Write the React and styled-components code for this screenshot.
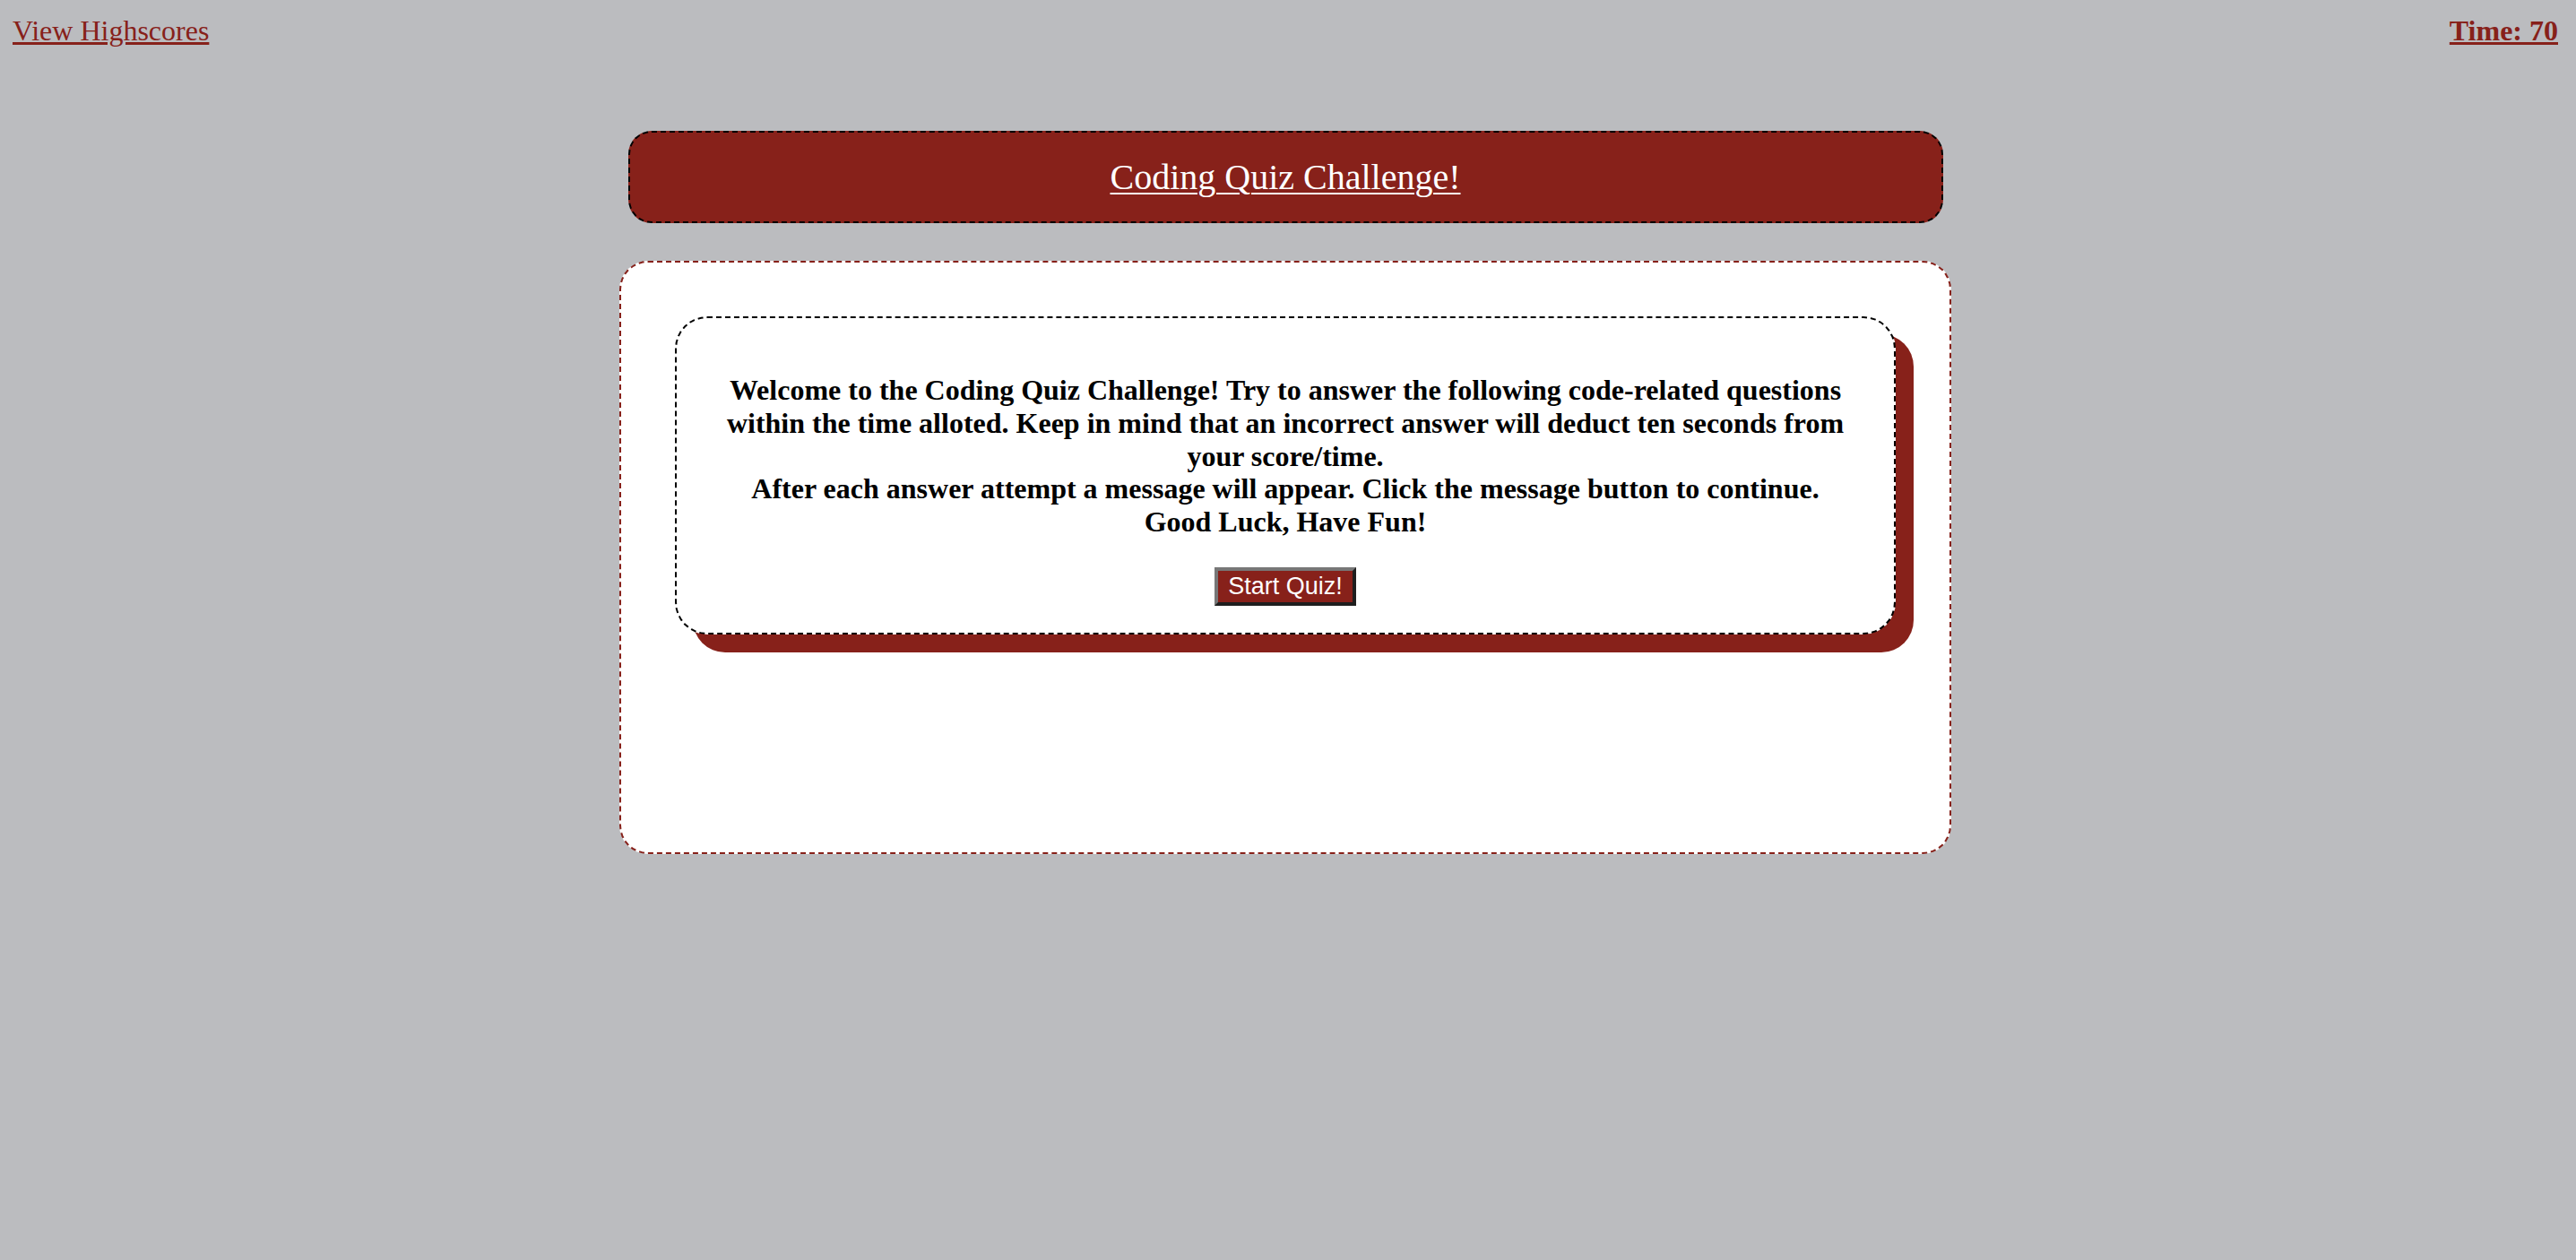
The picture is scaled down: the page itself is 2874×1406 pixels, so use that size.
import React from 'react';
import styled, {createGlobalStyle} from 'styled-components';

const red = '#87211a';

const GlobalStyle = createGlobalStyle`
  html, body {
    margin: 0;
    padding: 0;
    background-color: #bbbcbf;
    font-family: "Liberation Serif", "Times New Roman", serif;
  }
`;

const Page = styled.div`
  min-height: 1406px;
  padding-right: 6px;
  display: flex;
  flex-direction: column;
  align-items: center;
`;

const TopBar = styled.nav`
  align-self: stretch;
  display: flex;
  justify-content: space-between;
  align-items: flex-start;
  padding: 16px 14px 0 14px;
  font-size: 32px;
  line-height: 37px;
`;

const TopLink = styled.a`
  color: ${red};
  text-decoration: underline;
  font-weight: ${(p) => (p.$bold ? 700 : 400)};
  cursor: pointer;
`;

const Banner = styled.header`
  margin-top: 93px;
  width: 1467px;
  height: 103px;
  box-sizing: border-box;
  display: flex;
  align-items: center;
  justify-content: center;
  background-color: ${red};
  border: 2px dashed #000;
  border-radius: 26px;
`;

const Title = styled.h1`
  margin: 0;
  color: #fff;
  font-size: 40px;
  font-weight: 400;
  line-height: 46px;
  text-decoration: underline;
  text-decoration-thickness: 2px;
  text-underline-offset: 4px;
`;

const Card = styled.main`
  margin-top: 42px;
  width: 1486px;
  height: 662px;
  box-sizing: border-box;
  padding: 60px;
  background-color: #fff;
  border: 2px dashed ${red};
  border-radius: 32px;
`;

const Intro = styled.section`
  box-sizing: border-box;
  padding: 30px;
  display: flex;
  flex-direction: column;
  align-items: center;
  background-color: #fff;
  border: 2px dashed #000;
  border-radius: 36px;
  box-shadow: 20px 20px 0 ${red};
`;

const IntroText = styled.p`
  margin: 32px 0 32px;
  font-size: 32px;
  font-weight: 700;
  line-height: 36.8px;
  text-align: center;
  color: #000;
`;

const StartButton = styled.button`
  font-family: "Liberation Sans", Arial, sans-serif;
  font-size: 27px;
  line-height: 31px;
  padding: 2px 11px;
  color: #fff;
  background-color: ${red};
  border-style: solid;
  border-width: 4px;
  border-color: #777 #1f1f1f #1f1f1f #777;
  cursor: pointer;
`;

const App = () => (
  <>
    <GlobalStyle />
    <Page>
      <TopBar>
        <TopLink>View Highscores</TopLink>
        <TopLink $bold>Time: 70</TopLink>
      </TopBar>
      <Banner>
        <Title>Coding Quiz Challenge!</Title>
      </Banner>
      <Card>
        <Intro>
          <IntroText>
            Welcome to the Coding Quiz Challenge! Try to answer the following code-related questions
            within the time alloted. Keep in mind that an incorrect answer will deduct ten seconds from
            your score/time.
            <br />
            After each answer attempt a message will appear. Click the message button to continue.
            <br />
            Good Luck, Have Fun!
          </IntroText>
          <StartButton>Start Quiz!</StartButton>
        </Intro>
      </Card>
    </Page>
  </>
);

export default App;
